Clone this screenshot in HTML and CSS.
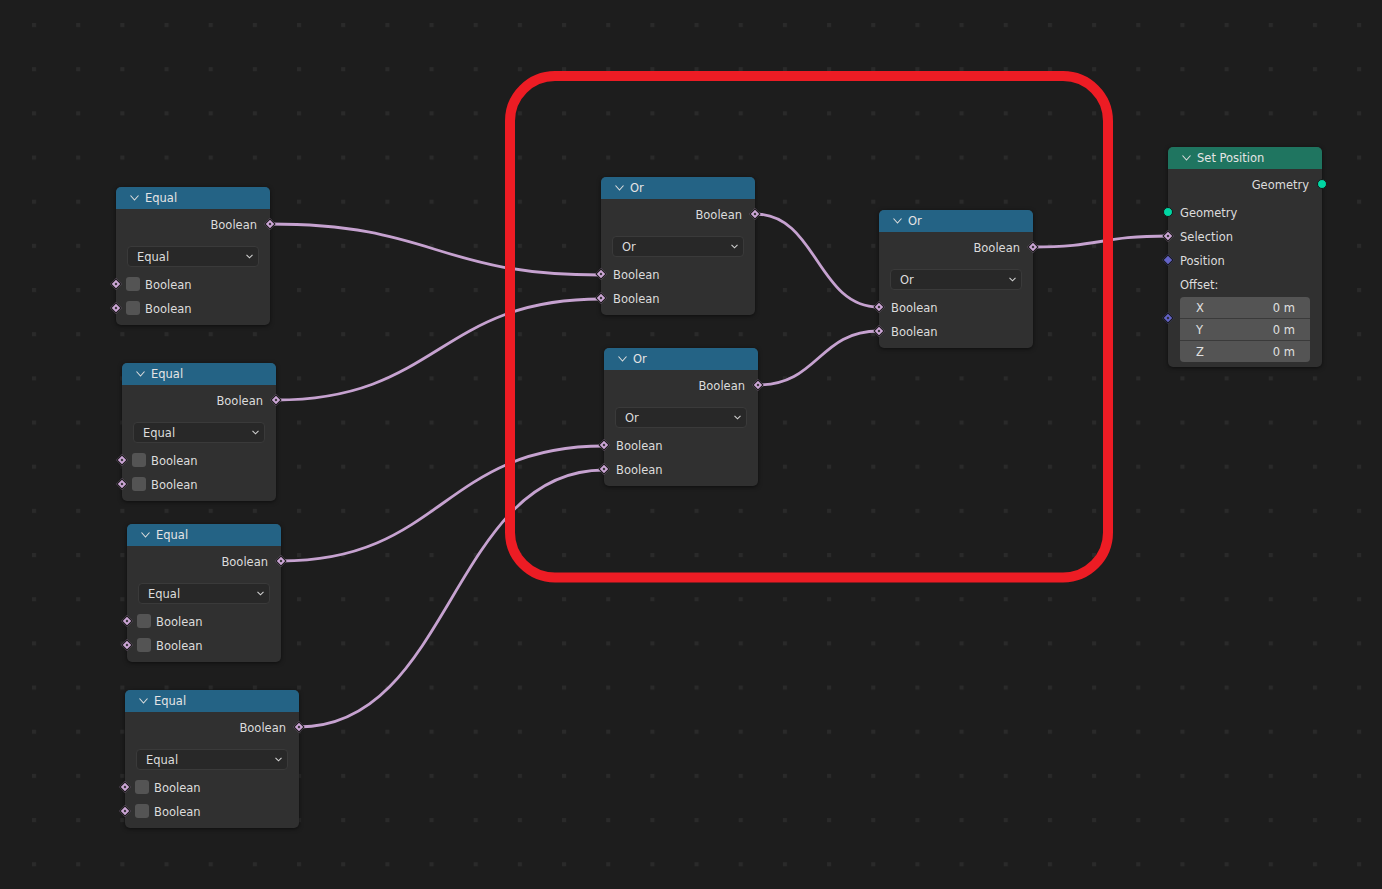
FILE: index.html
```html
<!DOCTYPE html>
<html>
<head>
<meta charset="utf-8">
<link rel="stylesheet" href="styles.css">
</head>
<body>
<div class="canvas">
  <svg class="backdrop" viewBox="0 0 1382 889" width="1382" height="889">
    <defs>
      <pattern id="dots" patternUnits="userSpaceOnUse" x="32" y="23" width="44.17" height="44.17">
        <rect x="0" y="0" width="4" height="4" fill="#2a2a2a"/>
      </pattern>
    </defs>
    <rect x="0" y="0" width="1382" height="889" fill="#1d1d1d"/>
    <rect x="0" y="0" width="1382" height="889" fill="url(#dots)"/>
    <g class="wires" fill="none">
      <path d="M270 224 C435.5 224 435.5 275 601 275"/>
      <path d="M276 400 C438.5 400 438.5 299 601 299"/>
      <path d="M281 561 C442.5 561 442.5 446 604 446"/>
      <path d="M299 727 C451.5 727 451.5 470 604 470"/>
      <path d="M755 214 C817 214 817 307 879 307"/>
      <path d="M758 385 C818.5 385 818.5 331 879 331"/>
      <path d="M1033 247 C1100.5 247 1100.5 236 1168 236"/>
    </g>
    <rect class="frame" x="510" y="76" width="598" height="501.5" rx="45" ry="45"/>
  </svg>

  <!-- Equal nodes -->
  <div class="node n-e1">
    <div class="head"><svg class="chev" width="9" height="6" viewBox="0 0 9 6"><polyline points="0.5,0.5 4.5,5 8.5,0.5"/></svg><span>Equal</span></div>
    <div class="body">
      <div class="row out">Boolean<i class="sock bool out"></i></div>
      <div class="menu"><span>Equal</span><svg class="mchev" width="7" height="5" viewBox="0 0 7 5"><polyline points="0.5,0.8 3.5,3.8 6.5,0.8"/></svg></div>
      <div class="row in check"><i class="sock bool in"></i><b class="box"></b>Boolean</div>
      <div class="row in check"><i class="sock bool in"></i><b class="box"></b>Boolean</div>
    </div>
  </div>

  <div class="node n-e2">
    <div class="head"><svg class="chev" width="9" height="6" viewBox="0 0 9 6"><polyline points="0.5,0.5 4.5,5 8.5,0.5"/></svg><span>Equal</span></div>
    <div class="body">
      <div class="row out">Boolean<i class="sock bool out"></i></div>
      <div class="menu"><span>Equal</span><svg class="mchev" width="7" height="5" viewBox="0 0 7 5"><polyline points="0.5,0.8 3.5,3.8 6.5,0.8"/></svg></div>
      <div class="row in check"><i class="sock bool in"></i><b class="box"></b>Boolean</div>
      <div class="row in check"><i class="sock bool in"></i><b class="box"></b>Boolean</div>
    </div>
  </div>

  <div class="node n-e3">
    <div class="head"><svg class="chev" width="9" height="6" viewBox="0 0 9 6"><polyline points="0.5,0.5 4.5,5 8.5,0.5"/></svg><span>Equal</span></div>
    <div class="body">
      <div class="row out">Boolean<i class="sock bool out"></i></div>
      <div class="menu"><span>Equal</span><svg class="mchev" width="7" height="5" viewBox="0 0 7 5"><polyline points="0.5,0.8 3.5,3.8 6.5,0.8"/></svg></div>
      <div class="row in check"><i class="sock bool in"></i><b class="box"></b>Boolean</div>
      <div class="row in check"><i class="sock bool in"></i><b class="box"></b>Boolean</div>
    </div>
  </div>

  <div class="node n-e4">
    <div class="head"><svg class="chev" width="9" height="6" viewBox="0 0 9 6"><polyline points="0.5,0.5 4.5,5 8.5,0.5"/></svg><span>Equal</span></div>
    <div class="body">
      <div class="row out">Boolean<i class="sock bool out"></i></div>
      <div class="menu"><span>Equal</span><svg class="mchev" width="7" height="5" viewBox="0 0 7 5"><polyline points="0.5,0.8 3.5,3.8 6.5,0.8"/></svg></div>
      <div class="row in check"><i class="sock bool in"></i><b class="box"></b>Boolean</div>
      <div class="row in check"><i class="sock bool in"></i><b class="box"></b>Boolean</div>
    </div>
  </div>

  <!-- Or nodes -->
  <div class="node n-o1">
    <div class="head"><svg class="chev" width="9" height="6" viewBox="0 0 9 6"><polyline points="0.5,0.5 4.5,5 8.5,0.5"/></svg><span>Or</span></div>
    <div class="body">
      <div class="row out">Boolean<i class="sock bool out"></i></div>
      <div class="menu"><span>Or</span><svg class="mchev" width="7" height="5" viewBox="0 0 7 5"><polyline points="0.5,0.8 3.5,3.8 6.5,0.8"/></svg></div>
      <div class="row in"><i class="sock bool in"></i>Boolean</div>
      <div class="row in"><i class="sock bool in"></i>Boolean</div>
    </div>
  </div>

  <div class="node n-o2">
    <div class="head"><svg class="chev" width="9" height="6" viewBox="0 0 9 6"><polyline points="0.5,0.5 4.5,5 8.5,0.5"/></svg><span>Or</span></div>
    <div class="body">
      <div class="row out">Boolean<i class="sock bool out"></i></div>
      <div class="menu"><span>Or</span><svg class="mchev" width="7" height="5" viewBox="0 0 7 5"><polyline points="0.5,0.8 3.5,3.8 6.5,0.8"/></svg></div>
      <div class="row in"><i class="sock bool in"></i>Boolean</div>
      <div class="row in"><i class="sock bool in"></i>Boolean</div>
    </div>
  </div>

  <div class="node n-o3">
    <div class="head"><svg class="chev" width="9" height="6" viewBox="0 0 9 6"><polyline points="0.5,0.5 4.5,5 8.5,0.5"/></svg><span>Or</span></div>
    <div class="body">
      <div class="row out">Boolean<i class="sock bool out"></i></div>
      <div class="menu"><span>Or</span><svg class="mchev" width="7" height="5" viewBox="0 0 7 5"><polyline points="0.5,0.8 3.5,3.8 6.5,0.8"/></svg></div>
      <div class="row in"><i class="sock bool in"></i>Boolean</div>
      <div class="row in"><i class="sock bool in"></i>Boolean</div>
    </div>
  </div>

  <!-- Set Position -->
  <div class="node geo n-sp">
    <div class="head"><svg class="chev" width="9" height="6" viewBox="0 0 9 6"><polyline points="0.5,0.5 4.5,5 8.5,0.5"/></svg><span>Set Position</span></div>
    <div class="body">
      <div class="row out">Geometry<i class="sock geom out"></i></div>
      <div class="row in first"><i class="sock geom in"></i>Geometry</div>
      <div class="row in"><i class="sock bool in"></i>Selection</div>
      <div class="row in"><i class="sock vec solid in"></i>Position</div>
      <div class="row in">Offset:</div>
      <div class="vector">
        <i class="sock vec in"></i>
        <div class="vrow"><span>X</span><span>0 m</span></div>
        <div class="vrow"><span>Y</span><span>0 m</span></div>
        <div class="vrow"><span>Z</span><span>0 m</span></div>
      </div>
    </div>
  </div>
</div>
</body>
</html>
```

FILE: styles.css
```css
html, body {
  margin: 0;
  padding: 0;
  background: #1d1d1d;
  overflow: hidden;
}

.canvas {
  position: relative;
  width: 1382px;
  height: 889px;
  font-family: "DejaVu Sans", "Liberation Sans", sans-serif;
  font-size: 11.5px;
  color: #dcdcdc;
}

.backdrop {
  position: absolute;
  left: 0;
  top: 0;
  display: block;
}

.wires path {
  stroke: #c6a2d0;
  stroke-width: 2.8;
  stroke-linecap: round;
}

.frame {
  fill: none;
  stroke: #ed1c24;
  stroke-width: 10;
}

/* nodes */
.node {
  position: absolute;
  width: 154px;
  background: #303030;
  border-radius: 5px;
  box-shadow: 0 1px 4px rgba(0, 0, 0, 0.55);
}

.n-e1 { left: 116px; top: 187px; }
.n-e2 { left: 122px; top: 363px; }
.n-e3 { left: 127px; top: 524px; }
.n-e4 { left: 125px; top: 690px; width: 174px; }
.n-o1 { left: 601px; top: 177px; }
.n-o2 { left: 604px; top: 348px; }
.n-o3 { left: 879px; top: 210px; }
.n-sp { left: 1168px; top: 147px; }

.head {
  height: 22px;
  display: flex;
  align-items: center;
  gap: 6px;
  padding-left: 14px;
  background: #246385;
  border-radius: 5px 5px 0 0;
  color: #e4e4e4;
}

.geo .head {
  background: #1f7560;
}

.chev {
  display: block;
}

.chev polyline {
  fill: none;
  stroke: #dcdcdc;
  stroke-width: 1.1;
}

.body {
  padding: 3px 0 5px;
  display: flex;
  flex-direction: column;
}

.row {
  position: relative;
  box-sizing: border-box;
  height: 24px;
  padding-top: 2px;
  display: flex;
  align-items: center;
}

.row.out {
  justify-content: flex-end;
  padding-right: 13px;
}

.row.in {
  padding-left: 12px;
}

.row.in.check {
  padding-left: 10px;
}

.row.first {
  margin-top: 4px;
}

.box {
  display: block;
  width: 14px;
  height: 14px;
  border-radius: 3px;
  background: #545454;
  margin-right: 5px;
  position: relative;
  top: -1px;
}

.menu {
  margin: 10px 11px 5px 11px;
  height: 21px;
  box-sizing: border-box;
  border: 1px solid #3a3a3a;
  border-radius: 4px;
  background: #282828;
  display: flex;
  align-items: center;
  justify-content: space-between;
  padding: 0 5px 0 9px;
}

.mchev polyline {
  fill: none;
  stroke: #d0d0d0;
  stroke-width: 1.1;
}

/* sockets */
.sock {
  position: absolute;
  top: 50%;
  box-sizing: border-box;
  border: 1px solid #161616;
}

.sock.in { left: 0; }
.sock.out { right: 0; }

.sock.bool, .sock.vec {
  width: 8px;
  height: 8px;
  background: #cca6d6;
}

.sock.bool.in, .sock.vec.in { transform: translate(-50%, -50%) rotate(45deg); }
.sock.bool.out { transform: translate(50%, -50%) rotate(45deg); }

.sock.bool::after, .sock.vec::after {
  content: "";
  position: absolute;
  left: 2px;
  top: 2px;
  width: 2px;
  height: 2px;
  background: #262626;
}

.sock.vec {
  background: #6363c7;
}

.sock.vec.solid::after {
  display: none;
}

.sock.geom {
  width: 10px;
  height: 10px;
  border-radius: 50%;
  background: #00d6a3;
}

.sock.geom.in { transform: translate(-50%, -50%); }
.sock.geom.out { transform: translate(50%, -50%); }

/* vector */
.vector {
  position: relative;
  margin: 1px 12px 0;
  border-radius: 4px;
  display: flex;
  flex-direction: column;
  gap: 1px;
  background: #3a3a3a;
}

.vector .sock {
  top: 21px;
  left: -12px;
}

.vrow {
  height: 21px;
  background: #545454;
  display: flex;
  align-items: center;
  justify-content: space-between;
  padding: 0 15px 0 16px;
  color: #e0e0e0;
}

.vrow:first-of-type {
  border-radius: 4px 4px 0 0;
}

.vrow:last-of-type {
  border-radius: 0 0 4px 4px;
}
```
